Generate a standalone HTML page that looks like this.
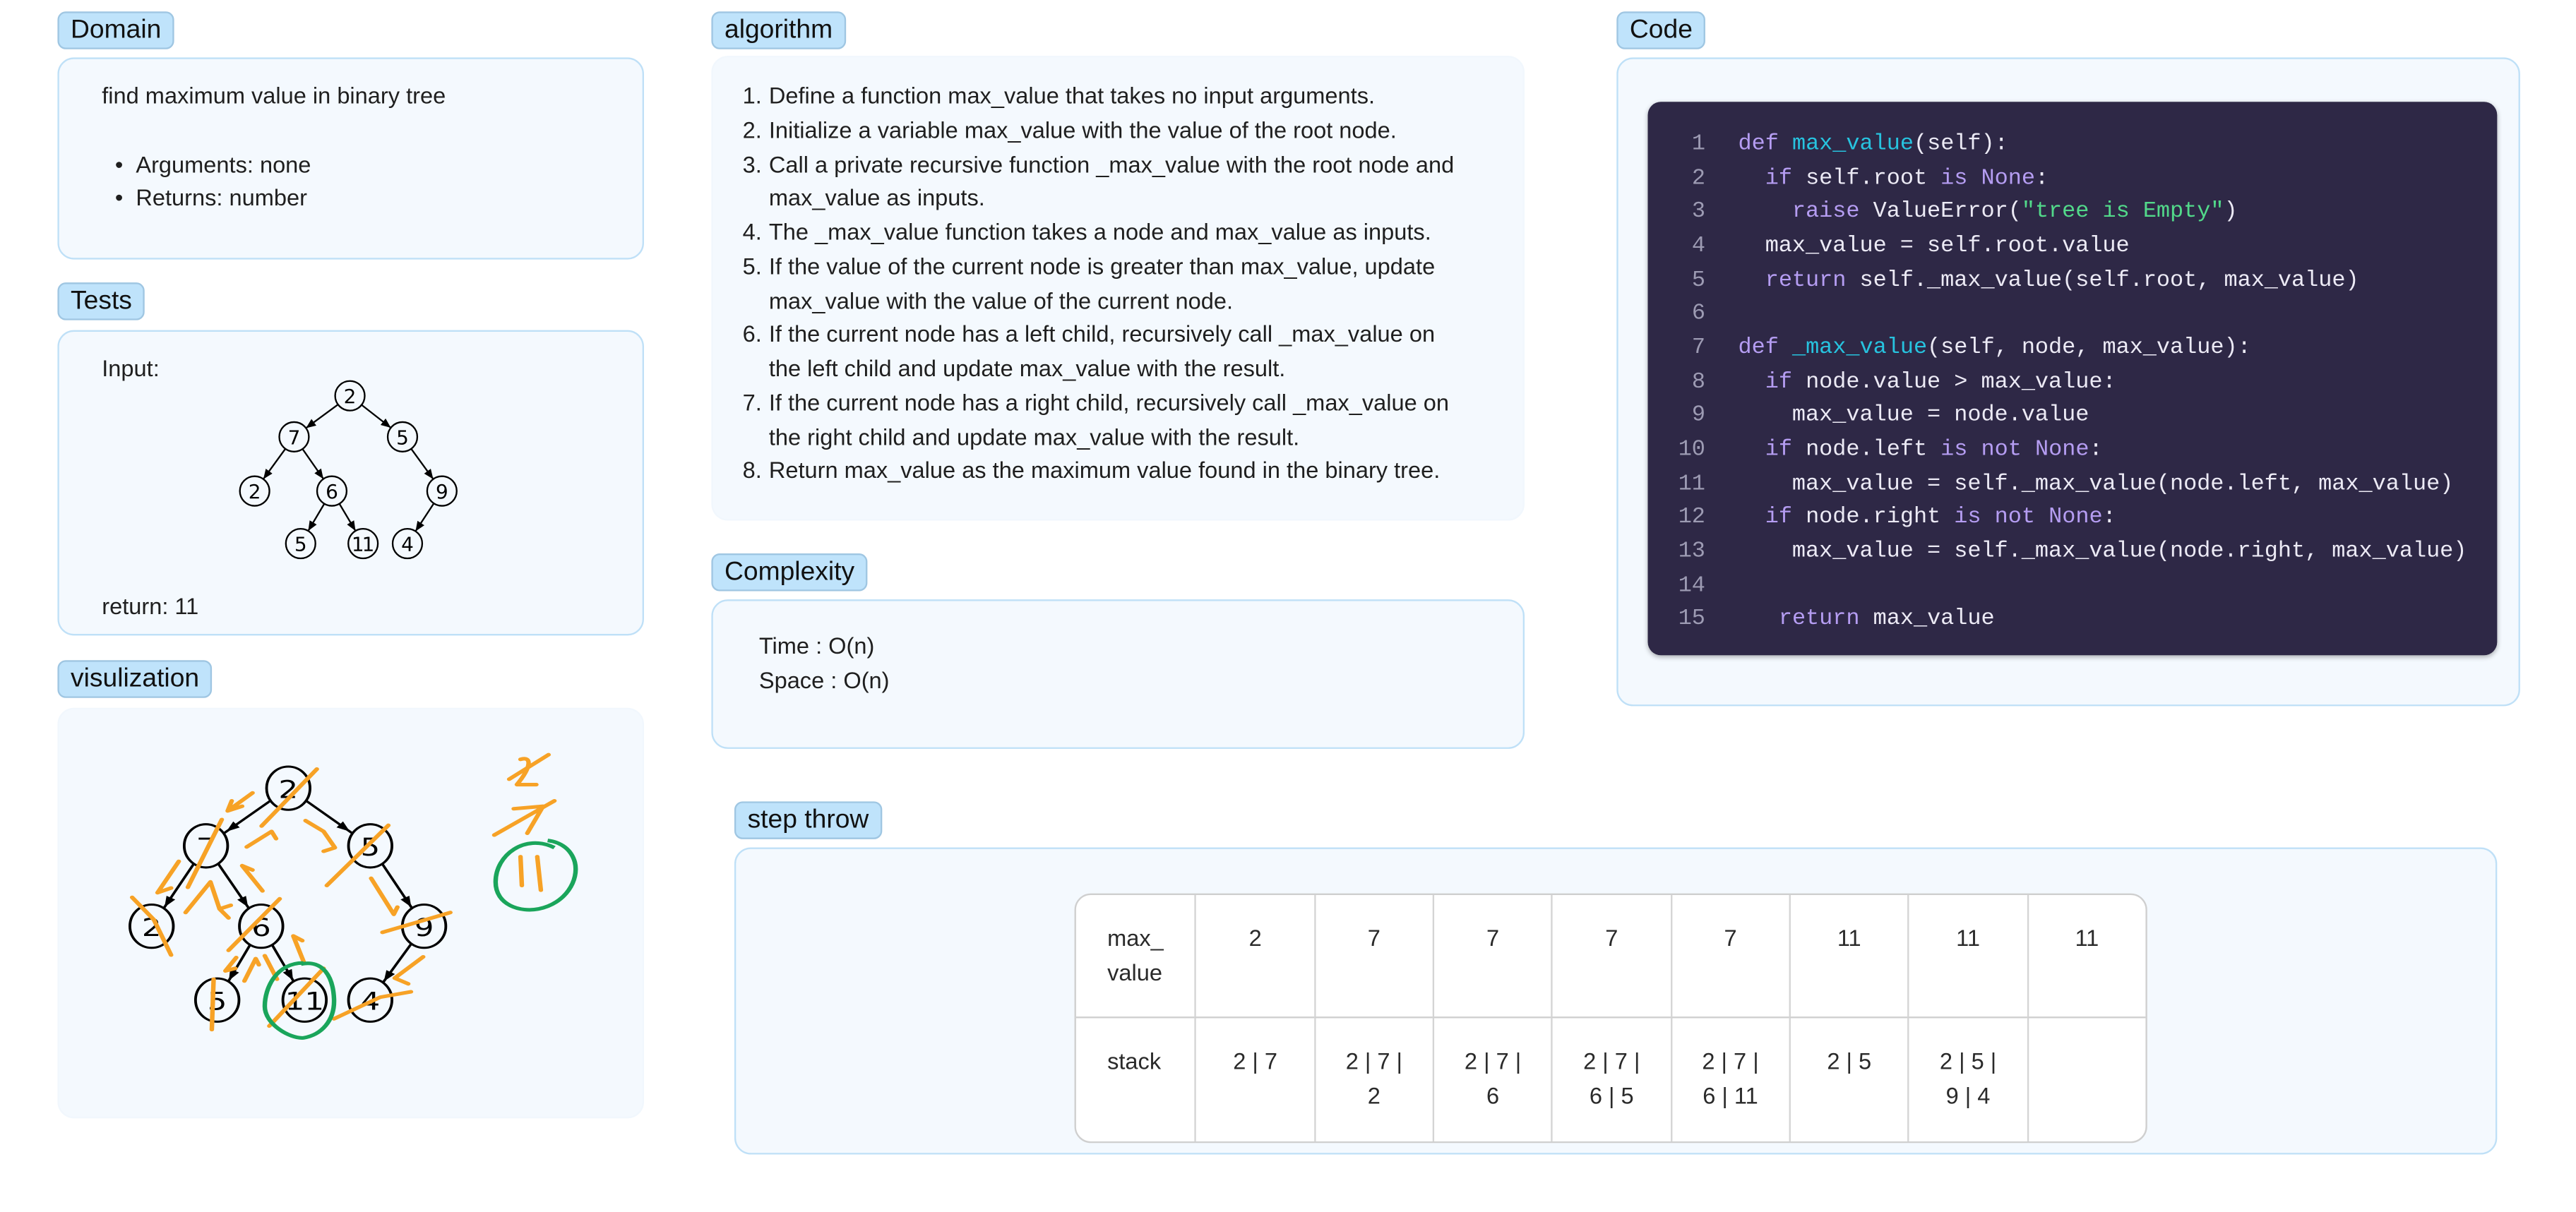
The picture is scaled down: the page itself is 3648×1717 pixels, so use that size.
<!DOCTYPE html>
<html><head><meta charset="utf-8"><style>
*{margin:0;padding:0;box-sizing:border-box}
html,body{width:3648px;height:1716px;background:#fff;overflow:hidden}
#w{position:absolute;left:0;top:0;width:1568px;height:737.6px;transform:scale(2.32653);transform-origin:0 0;font-family:"Liberation Sans",sans-serif;color:#1f1f1f;font-size:14px}
.a{position:absolute}
.lab{position:absolute;height:23px;background:#bfe3fb;border:1px solid #9fc6e2;border-radius:5px;font-size:16px;line-height:21px;padding:0 7px;color:#111}
.box{position:absolute;background:#f4f9fe;border:1px solid #bfe0f7;border-radius:10px}
.t{position:absolute;white-space:nowrap;line-height:20px}
pre{font-family:"Liberation Mono",monospace;font-size:13.7px;line-height:20.65px;color:#eceaf5;position:absolute}
.k{color:#b59df2}.f{color:#27c3df}.s{color:#52d98a}.n{color:#9d9bb3}
table{position:absolute;border-collapse:separate;border-spacing:0;background:#fff;border:1.5px solid #cfcfcf;border-radius:10px;overflow:hidden}
td{border-left:1px solid #d4d4d4;width:72.5px;height:75px;vertical-align:top;text-align:center;padding-top:16px;line-height:20.5px;font-size:14px;color:#2a2a2a}
td:first-child{border-left:none;text-align:left;padding-left:19px}
tr:first-child td{border-bottom:1.5px solid #cfcfcf}
</style></head><body><div id="w">

<div class="lab" style="left:35px;top:7px">Domain</div>
<div class="box" style="left:35px;top:35px;width:357px;height:123px"></div>
<div class="t" style="left:62px;top:48px">find maximum value in binary tree</div>
<div class="t" style="left:70px;top:90px">•&nbsp;&nbsp;Arguments: none</div>
<div class="t" style="left:70px;top:110px">•&nbsp;&nbsp;Returns: number</div>

<div class="lab" style="left:35px;top:172px">Tests</div>
<div class="box" style="left:35px;top:201px;width:357px;height:186px"></div>
<div class="t" style="left:62px;top:214px">Input:</div>
<div class="t" style="left:62px;top:359px">return: 11</div>

<svg class="a" style="left:0;top:0" width="1568" height="738">
<defs>
<marker id="m" markerUnits="userSpaceOnUse" markerWidth="20" markerHeight="8" refX="15" refY="2.5" orient="auto"><path d="M0,0 L6,2.5 L0,5z" fill="#000"/></marker>
<marker id="mb" markerUnits="userSpaceOnUse" markerWidth="120" markerHeight="30" refX="90" refY="11" orient="auto"><path d="M0,0 L30,11 L0,22z" fill="#000"/></marker>
</defs>
<g stroke="#000" stroke-width="1" fill="none" marker-end="url(#m)">
<line x1="213" y1="241" x2="179" y2="266"/><line x1="213" y1="241" x2="245" y2="266"/>
<line x1="179" y1="266" x2="155" y2="299"/><line x1="179" y1="266" x2="202" y2="299"/>
<line x1="245" y1="266" x2="269" y2="299"/><line x1="202" y1="299" x2="183" y2="331"/>
<line x1="202" y1="299" x2="221" y2="331"/><line x1="269" y1="299" x2="248" y2="331"/>
<line x1="542" y1="555" x2="509" y2="579"/><line x1="542" y1="555" x2="576" y2="579"/>
<line x1="509" y1="579" x2="486" y2="613"/><line x1="509" y1="579" x2="531" y2="613"/>
<line x1="576" y1="579" x2="599" y2="613"/><line x1="531" y1="613" x2="513" y2="645"/>
<line x1="531" y1="613" x2="549" y2="645"/><line x1="599" y1="613" x2="576" y2="645"/>
</g>
<g stroke="#000" stroke-width="1" fill="#f4f9fe">
<circle cx="213" cy="241" r="9"/><circle cx="179" cy="266" r="9"/><circle cx="245" cy="266" r="9"/>
<circle cx="155" cy="299" r="9"/><circle cx="202" cy="299" r="9"/><circle cx="269" cy="299" r="9"/>
<circle cx="183" cy="331" r="9"/><circle cx="221" cy="331" r="9"/><circle cx="248" cy="331" r="9"/>
<circle cx="542" cy="555" r="9"/><circle cx="509" cy="579" r="9"/><circle cx="576" cy="579" r="9"/>
<circle cx="486" cy="613" r="9"/><circle cx="531" cy="613" r="9"/><circle cx="599" cy="613" r="9"/>
<circle cx="513" cy="645" r="9"/><circle cx="549" cy="645" r="9"/><circle cx="576" cy="645" r="9"/>
</g>
<g font-family="DejaVu Sans,sans-serif" font-size="12" text-anchor="middle" fill="#000">
<text x="213" y="245.5">2</text><text x="179" y="270.5">7</text><text x="245" y="270.5">5</text>
<text x="155" y="303.5">2</text><text x="202" y="303.5">6</text><text x="269" y="303.5">9</text>
<text x="183" y="335.5">5</text><text x="221" y="335.5" textLength="14">11</text><text x="248" y="335.5">4</text>
<text x="542" y="559.5">2</text><text x="509" y="583.5">7</text><text x="576" y="583.5">5</text>
<text x="486" y="617.5">2</text><text x="531" y="617.5">6</text><text x="599" y="617.5">9</text>
<text x="513" y="649.5">5</text><text x="549" y="649.5" textLength="14">11</text><text x="576" y="649.5">4</text>
</g>
</svg>

<div class="lab" style="left:35px;top:402px">visulization</div>
<div class="box" style="left:35px;top:431px;width:357px;height:250px;border-color:#f1f7fd"></div>
<svg class="a" style="left:0;top:0" width="1568" height="738">
<g transform="translate(0 391.1) scale(0.2755 0.2194)">
<g stroke="#000" stroke-width="6" fill="none" marker-end="url(#mb)">
<line x1="637" y1="405" x2="455" y2="565"/><line x1="637" y1="405" x2="818" y2="565"/>
<line x1="455" y1="565" x2="335" y2="788"/><line x1="455" y1="565" x2="577" y2="788"/>
<line x1="818" y1="565" x2="937" y2="788"/><line x1="577" y1="788" x2="480" y2="993"/>
<line x1="577" y1="788" x2="673" y2="993"/><line x1="937" y1="788" x2="818" y2="993"/>
</g>
<g stroke="#000" stroke-width="6" fill="#f4f9fe">
<ellipse cx="637" cy="405" rx="48" ry="60"/><ellipse cx="455" cy="565" rx="48" ry="60"/><ellipse cx="818" cy="565" rx="48" ry="60"/>
<ellipse cx="335" cy="788" rx="48" ry="60"/><ellipse cx="577" cy="788" rx="48" ry="60"/><ellipse cx="937" cy="788" rx="48" ry="60"/>
<ellipse cx="480" cy="993" rx="48" ry="60"/><ellipse cx="673" cy="993" rx="48" ry="60"/><ellipse cx="818" cy="993" rx="48" ry="60"/>
</g>
<g font-family="DejaVu Sans,sans-serif" font-size="68" text-anchor="middle" fill="#000">
<text x="637" y="432">2</text><text x="455" y="592">7</text><text x="818" y="592">5</text>
<text x="335" y="815">2</text><text x="577" y="815">6</text><text x="937" y="815">9</text>
<text x="480" y="1020">5</text><text x="673" y="1020">11</text><text x="818" y="1020">4</text>
</g>
<g stroke="#f7a226" stroke-width="10" fill="none" stroke-linecap="round" stroke-linejoin="round">
<path d="M700,352 L578,510"/>
<path d="M558,418 L503,468 M503,468 L535,455 M503,468 L512,440"/>
<path d="M490,492 L415,680"/>
<path d="M545,568 L600,525 L610,545"/>
<path d="M675,495 L715,525 L740,570 L715,580"/>
<path d="M858,508 L722,675"/>
<path d="M395,608 L348,695 M348,695 L378,682"/>
<path d="M410,750 L465,665 L485,740 L505,765 M485,740 L510,730"/>
<path d="M580,690 L535,620 L558,632"/>
<path d="M292,708 L340,770 L378,868"/>
<path d="M618,712 L505,855"/>
<path d="M820,655 L870,755 L878,735"/>
<path d="M845,805 L995,750"/>
<path d="M522,875 L498,912 M498,912 L520,905"/>
<path d="M540,940 L565,878 L572,895"/>
<path d="M585,870 L612,935"/>
<path d="M672,890 L648,815 L668,828"/>
<path d="M715,905 L595,1065"/>
<path d="M472,935 L468,1075"/>
<path d="M935,873 L872,932 L902,948"/>
<path d="M738,1045 L840,985 L908,970"/>
<path d="M1125,380 L1212,312 M1150,325 C1175,315 1175,345 1142,395 L1185,395"/>
<path d="M1092,535 L1225,440 M1135,462 L1200,455 L1165,530"/>
<path d="M1150,595 L1153,675 M1187,595 L1195,688"/>
</g>
<g stroke="#1aa55b" stroke-width="10" fill="none">
<path d="M1225,570 C1160,530 1095,590 1095,665 C1095,730 1150,750 1190,740 C1250,725 1280,660 1270,610 C1262,575 1240,555 1210,550"/>
<path d="M670,890 C610,890 585,960 585,1010 C585,1060 640,1100 670,1098 C710,1090 740,1050 738,990 C736,930 715,880 665,893"/>
</g>
</g>
</svg>

<div class="lab" style="left:433px;top:7px">algorithm</div>
<div class="box" style="left:433px;top:34px;width:495px;height:283px;border-color:#f1f7fd"></div>
<div class="a" style="left:452px;top:48px;line-height:20.75px;font-size:14px">
<div style="position:relative;padding-left:16px"><span class="a" style="left:0">1.</span>Define a function max_value that takes no input arguments.</div>
<div style="position:relative;padding-left:16px"><span class="a" style="left:0">2.</span>Initialize a variable max_value with the value of the root node.</div>
<div style="position:relative;padding-left:16px"><span class="a" style="left:0">3.</span>Call a private recursive function _max_value with the root node and<br>max_value as inputs.</div>
<div style="position:relative;padding-left:16px"><span class="a" style="left:0">4.</span>The _max_value function takes a node and max_value as inputs.</div>
<div style="position:relative;padding-left:16px"><span class="a" style="left:0">5.</span>If the value of the current node is greater than max_value, update<br>max_value with the value of the current node.</div>
<div style="position:relative;padding-left:16px"><span class="a" style="left:0">6.</span>If the current node has a left child, recursively call _max_value on<br>the left child and update max_value with the result.</div>
<div style="position:relative;padding-left:16px"><span class="a" style="left:0">7.</span>If the current node has a right child, recursively call _max_value on<br>the right child and update max_value with the result.</div>
<div style="position:relative;padding-left:16px"><span class="a" style="left:0">8.</span>Return max_value as the maximum value found in the binary tree.</div>
</div>

<div class="lab" style="left:433px;top:337px">Complexity</div>
<div class="box" style="left:433px;top:365px;width:495px;height:91px"></div>
<div class="t" style="left:462px;top:383px">Time : O(n)</div>
<div class="t" style="left:462px;top:404px">Space : O(n)</div>

<div class="lab" style="left:984px;top:7px">Code</div>
<div class="box" style="left:984px;top:35px;width:550px;height:395px"></div>
<div class="a" style="left:1003px;top:62px;width:517px;height:337px;background:#2e2846;border-radius:8px;box-shadow:0 1px 3px rgba(0,0,0,.3)"></div>
<pre style="left:1018px;top:79px;text-align:right;width:20px" class="n">1
2
3
4
5
6
7
8
9
10
11
12
13
14
15</pre>
<pre style="left:1058px;top:79px"><span class="k">def</span> <span class="f">max_value</span>(self):
  <span class="k">if</span> self.root <span class="k">is</span> <span class="k">None</span>:
    <span class="k">raise</span> ValueError(<span class="s">"tree is Empty"</span>)
  max_value = self.root.value
  <span class="k">return</span> self._max_value(self.root, max_value)

<span class="k">def</span> <span class="f">_max_value</span>(self, node, max_value):
  <span class="k">if</span> node.value &gt; max_value:
    max_value = node.value
  <span class="k">if</span> node.left <span class="k">is</span> <span class="k">not</span> <span class="k">None</span>:
    max_value = self._max_value(node.left, max_value)
  <span class="k">if</span> node.right <span class="k">is</span> <span class="k">not</span> <span class="k">None</span>:
    max_value = self._max_value(node.right, max_value)

   <span class="k">return</span> max_value</pre>

<div class="lab" style="left:447px;top:488px">step throw</div>
<div class="box" style="left:447px;top:516px;width:1073px;height:187px"></div>
<table style="left:654px;top:544px;width:653px;height:150px">
<tr><td>max_<br>value</td><td>2</td><td>7</td><td>7</td><td>7</td><td>7</td><td>11</td><td>11</td><td>11</td></tr>
<tr><td>stack</td><td>2 | 7</td><td>2 | 7 |<br>2</td><td>2 | 7 |<br>6</td><td>2 | 7 |<br>6 | 5</td><td>2 | 7 |<br>6 | 11</td><td>2 | 5</td><td>2 | 5 |<br>9 | 4</td><td></td></tr>
</table>

</div></body></html>
